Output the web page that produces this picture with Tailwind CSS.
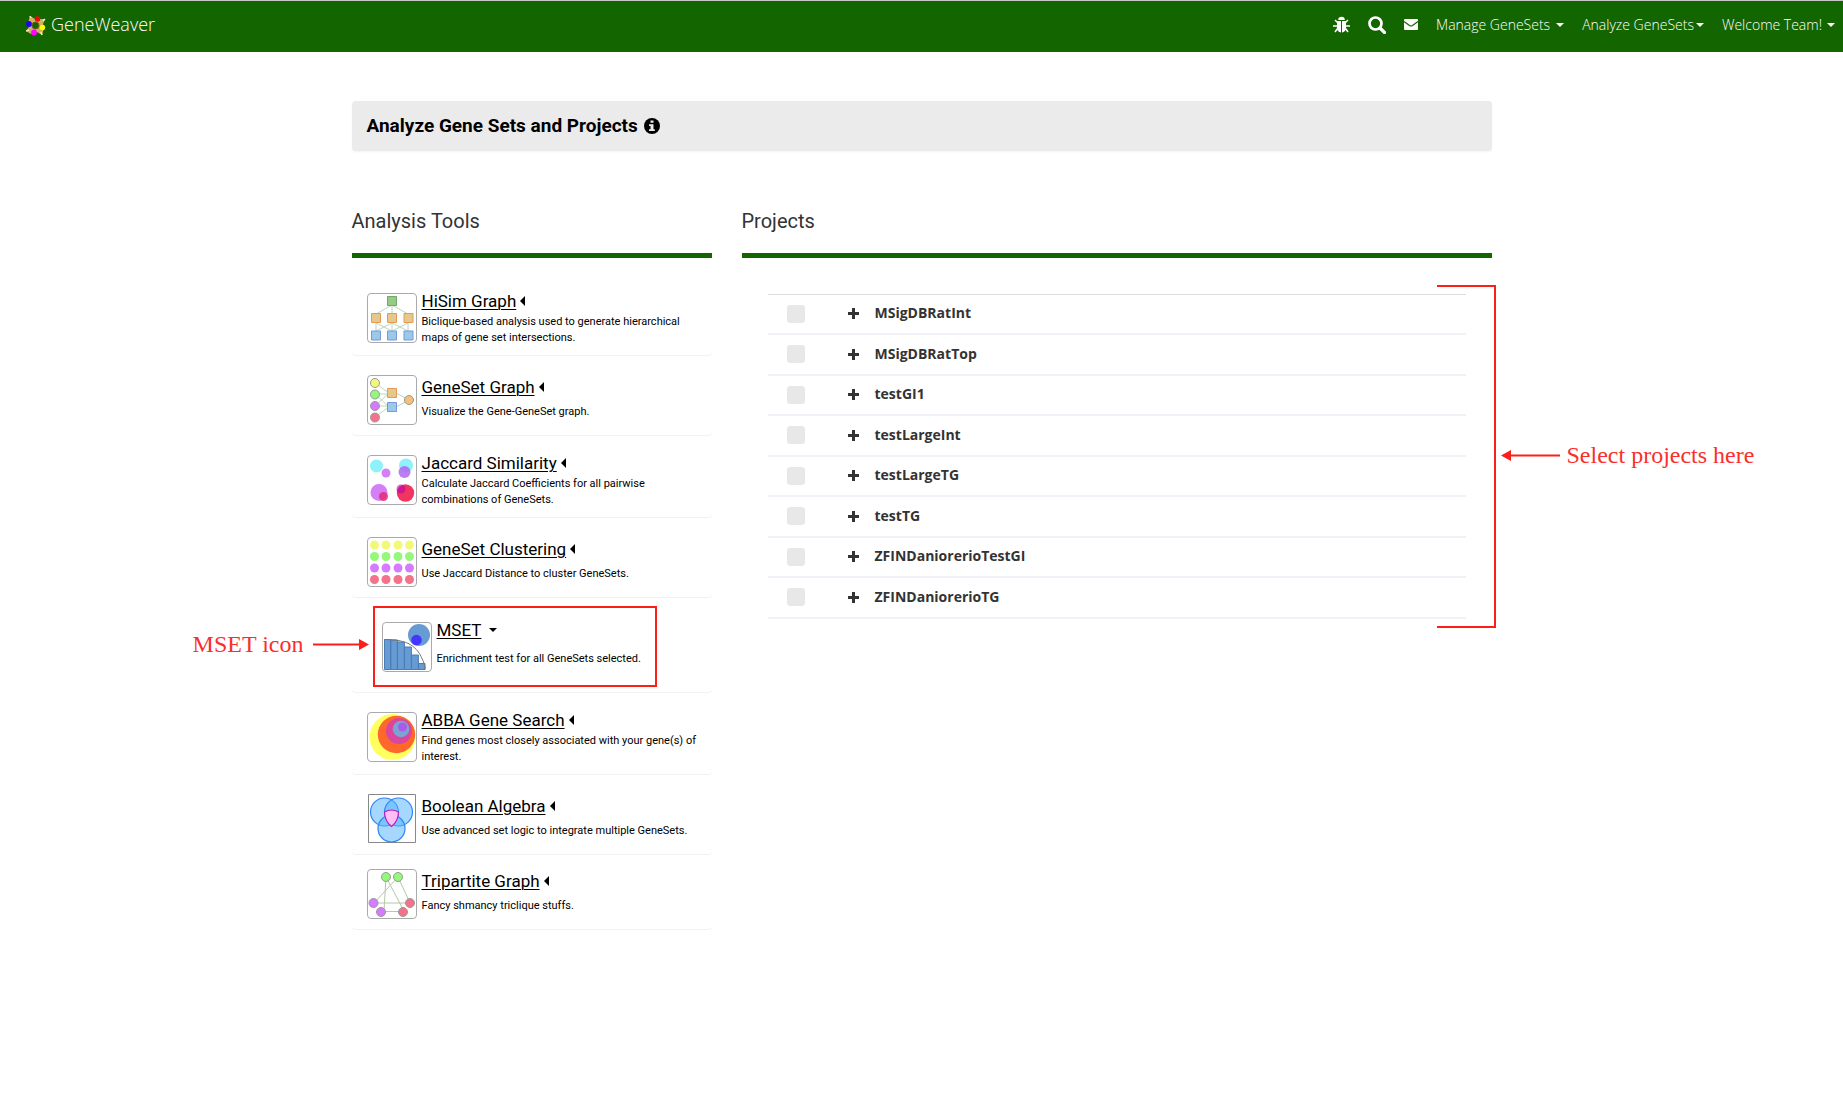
<!DOCTYPE html>
<html lang="en">
<head>
<meta charset="utf-8">
<title>GeneWeaver - Analyze Gene Sets and Projects</title>
<script src="https://cdn.jsdelivr.net/npm/@tailwindcss/browser@4"></script>
</head>
<body class="min-h-screen bg-white font-['Open_Sans',sans-serif] text-black">

<header class="flex h-[52px] items-center justify-between border-t border-b border-t-[#c8c8c8] border-b-[#1c4f5c] bg-[#136500] pr-2 pl-[26px] pb-1 font-light text-white">
  <a href="#" class="flex items-center gap-[5px] text-[18px] leading-6">
    <svg class="mt-1 size-5" viewBox="0 0 20 20" aria-hidden="true">
      <path d="M4 0L9 3L12 3L19 3L17 8L18 12L16 19L11 16L5 18L0 15L3 11L2 7Z" fill="#ceb35e"/>
      <path d="M4 0L5 2M19 3L17 5M16 19L15 16M0 15L3 14" stroke="#f3ead0" stroke-width="1.5"/>
      <circle cx="9.500" cy="9.500" r="3.500" fill="#136500" stroke="#6b5b25"/>
      <circle cx="11.500" cy="3" r="2.700" fill="#f00"/>
      <circle cx="3" cy="8" r="2.900" fill="#20f"/>
      <circle cx="16.500" cy="11.500" r="2.700" fill="#ff0"/>
      <circle cx="8" cy="16.500" r="2.900" fill="#f0f"/>
    </svg>
    <span>GeneWeaver</span>
  </a>
  <nav class="flex items-center pt-px text-[14px] leading-5">
    <a href="#" aria-label="Report a bug" class="mr-[18px]">
      <svg class="size-[17px]" viewBox="0 0 17 17" fill="none" stroke="#fff" stroke-width="1.500" aria-hidden="true">
        <path d="M5.200 4a3.300 3.300 0 0 1 6.600 0z" fill="#fff" stroke="none"/>
        <path d="M4 5h4v11.500C5.500 16.300 4 14.500 4 12zM9 5h4v7c0 2.500-1.500 4.300-4 4.500z" fill="#fff" stroke="none"/>
        <path d="M4.500 6.500L2 4M12.500 6.500L15 4M4 10H0M13 10h4M4.500 12.500L2 16M12.500 12.500L15 16"/>
      </svg>
    </a>
    <a href="#" aria-label="Search" class="mr-[18px]">
      <svg class="size-[18px]" viewBox="0 0 18 18" fill="none" stroke="#fff" aria-hidden="true">
        <circle cx="7.500" cy="7.500" r="6" stroke-width="2.700"/><path d="M12 12l4.500 4.500" stroke-width="3.200" stroke-linecap="round"/>
      </svg>
    </a>
    <a href="#" aria-label="Messages" class="mr-[18px]">
      <svg class="h-[11px] w-[14px]" viewBox="0 0 14 11" aria-hidden="true">
        <rect width="14" height="11" rx="1" fill="#fff"/><path d="M0 2.500L5.500 6.500Q7 7.500 8.500 6.500L14 2.500" fill="none" stroke="#136500" stroke-width="1.200"/>
      </svg>
    </a>
    <button class="mr-[18px] flex items-center gap-[6px]">Manage GeneSets <span class="border-x-4 border-t-4 border-x-transparent border-t-white"></span></button>
    <button class="mr-[18px] flex items-center gap-[2px]">Analyze GeneSets<span class="border-x-4 border-t-4 border-x-transparent border-t-white"></span></button>
    <button class="flex items-center gap-[5px]">Welcome Team! <span class="border-x-4 border-t-4 border-x-transparent border-t-white"></span></button>
  </nav>
</header>

<main class="mx-auto max-w-[1140px] pt-[49px] pb-10 font-[Roboto,sans-serif]">
  <div class="flex h-[50px] items-center gap-[6px] rounded bg-[#ebebeb] px-[15px] shadow-xs">
    <h1 class="text-[19px] leading-6 font-bold">Analyze Gene Sets and Projects</h1>
    <svg class="size-4" viewBox="0 0 16 16" role="img" aria-label="Information">
      <circle cx="8" cy="8" r="8" fill="#000"/><path d="M6.500 2.500h3v2.300h-3zM5 6.300h4.500v5h1.300v1.700H5v-1.700h1.500V8H5z" fill="#ebebeb"/>
    </svg>
  </div>

  <div class="mt-[56px] grid grid-cols-[360px_1fr] gap-[30px]">
    <section>
      <h2 class="h-[51px] border-b-5 border-[#136500] text-[20px] leading-7 text-[#333]">Analysis Tools</h2>
      <div class="mt-5 flex flex-col gap-[5px] text-[11px] leading-4">

        <article class="flex gap-[5px] rounded px-[15px] pt-[11px] pb-[9px] shadow-2xs">
          <svg class="mt-1 size-[50px] shrink-0 rounded-sm border border-[#aaa]" viewBox="1 1 48 48" aria-hidden="true">
            <path d="M25 12v9M25 12L9 21M25 12l16 9M9 30v8M25 30v8M41 30v8M9 30l16 8M25 30L9 38M25 30l16 8M41 30l-16 8" fill="none" stroke="#bcd8bc"/>
            <path d="M20.500 3.500h9v9h-9z" fill="#96ca85" stroke="#6aaa64"/>
            <path d="M4.500 20.500h9v9h-9zM20.500 20.500h9v9h-9zM37 20.500h9v9h-9z" fill="#e6c88d" stroke="#e29a55"/>
            <path d="M4.500 38h9v9h-9zM20.500 38h9v9h-9zM37 38h9v9h-9z" fill="#9bc9e8" stroke="#7797dc"/>
          </svg>
          <div>
            <h3 class="flex items-center gap-1 text-[17px] leading-6"><a href="#" class="underline decoration-1 underline-offset-2">HiSim Graph</a><span class="border-y-5 border-r-5 border-y-transparent border-r-black"></span></h3>
            <p class="mt-px">Biclique-based analysis used to generate hierarchical<br>maps of gene set intersections.</p>
          </div>
        </article>

        <article class="flex gap-[5px] rounded px-[15px] pt-[15px] pb-[10px] shadow-2xs">
          <svg class="size-[50px] shrink-0 rounded-sm border border-[#aaa]" viewBox="1 1 48 48" aria-hidden="true">
            <path d="M8 8l14 10M8 19h14M8 31l14-13M8 19l14 13M8 31h14M8 42l14-10M29 18l13 7M29 32l13-7" fill="none" stroke="#bcd8bc"/>
            <g stroke="#999"><circle cx="8" cy="8" r="4.500" fill="#f3f87a"/><circle cx="8" cy="19.500" r="4.500" fill="#94f87a"/><circle cx="8" cy="31" r="4.500" fill="#d67aff"/><circle cx="8" cy="42.500" r="4.500" fill="#f4738a"/><circle cx="42" cy="25" r="4.500" fill="#f4c17a"/></g>
            <path d="M20.500 13.500h9v9h-9z" fill="#e6c88d" stroke="#e29a55"/><path d="M20.500 27.500h9v9h-9z" fill="#9bc9e8" stroke="#7797dc"/>
          </svg>
          <div>
            <h3 class="flex items-center gap-1 text-[17px] leading-6"><a href="#" class="underline decoration-1 underline-offset-2">GeneSet Graph</a><span class="border-y-5 border-r-5 border-y-transparent border-r-black"></span></h3>
            <p class="mt-[5px]">Visualize the Gene-GeneSet graph.</p>
          </div>
        </article>

        <article class="flex gap-[5px] rounded px-[15px] pt-[11px] pb-[9px] shadow-2xs">
          <svg class="mt-1 size-[50px] shrink-0 rounded-sm border border-[#aaa]" viewBox="1 1 48 48" aria-hidden="true">
            <circle cx="9.500" cy="11" r="6.500" fill="#8ff2fa"/><circle cx="39" cy="10.500" r="7" fill="#8ff2fa"/>
            <circle cx="19" cy="18" r="4.500" fill="#d47ff8"/><circle cx="37.500" cy="17" r="6" fill="#b067ee" fill-opacity=".85"/>
            <circle cx="12" cy="37.500" r="8.500" fill="#d47ff8"/><circle cx="16.500" cy="41.500" r="4.500" fill="#e62a75" fill-opacity=".85"/>
            <circle cx="38.500" cy="38" r="8.700" fill="#f03560"/><circle cx="34" cy="34" r="4.500" fill="#be00aa" fill-opacity=".6"/>
          </svg>
          <div>
            <h3 class="flex items-center gap-1 text-[17px] leading-6"><a href="#" class="underline decoration-1 underline-offset-2">Jaccard Similarity</a><span class="border-y-5 border-r-5 border-y-transparent border-r-black"></span></h3>
            <p class="mt-px">Calculate Jaccard Coefficients for all pairwise<br>combinations of GeneSets.</p>
          </div>
        </article>

        <article class="flex gap-[5px] rounded px-[15px] pt-[15px] pb-[10px] shadow-2xs">
          <svg class="size-[50px] shrink-0 rounded-sm border border-[#aaa]" viewBox="1 1 48 48" aria-hidden="true">
            <g fill="#f3f87a"><circle cx="7.500" cy="8" r="4.500"/><circle cx="19" cy="8" r="4.500"/><circle cx="31" cy="8" r="4.500"/><circle cx="42.500" cy="8" r="4.500"/></g>
            <g fill="#94f87a"><circle cx="7.500" cy="19.500" r="4.500"/><circle cx="19" cy="19.500" r="4.500"/><circle cx="31" cy="19.500" r="4.500"/><circle cx="42.500" cy="19.500" r="4.500"/></g>
            <g fill="#d67aff"><circle cx="7.500" cy="31" r="4.500"/><circle cx="19" cy="31" r="4.500"/><circle cx="31" cy="31" r="4.500"/><circle cx="42.500" cy="31" r="4.500"/></g>
            <g fill="#f4738a"><circle cx="7.500" cy="42.500" r="4.500"/><circle cx="19" cy="42.500" r="4.500"/><circle cx="31" cy="42.500" r="4.500"/><circle cx="42.500" cy="42.500" r="4.500"/></g>
          </svg>
          <div>
            <h3 class="flex items-center gap-1 text-[17px] leading-6"><a href="#" class="underline decoration-1 underline-offset-2">GeneSet Clustering</a><span class="border-y-5 border-r-5 border-y-transparent border-r-black"></span></h3>
            <p class="mt-[5px]">Use Jaccard Distance to cluster GeneSets.</p>
          </div>
        </article>

        <article class="relative flex gap-[5px] rounded px-[30px] pt-4 pb-5 shadow-2xs">
          <div class="absolute top-1 left-[21px] h-[81px] w-[284px] border-2 border-[#fb1e1a]"></div>
          <div class="absolute top-7 right-[343px] flex items-center gap-[9px] font-['Liberation_Serif',serif] text-[24px] leading-7 whitespace-nowrap text-[#fb2e2e]">
            MSET icon
            <svg class="h-[11px] w-14" viewBox="0 0 56 11" fill="#fb1e1a" aria-hidden="true"><path d="M0 4.500h46V0l10 5.500L46 11V6.500H0z"/></svg>
          </div>
          <svg class="mt-1 size-[50px] shrink-0 rounded-sm border border-[#aaa]" viewBox="1 1 48 48" aria-hidden="true">
            <circle cx="37" cy="13" r="11" fill="#679bd3"/><circle cx="34.500" cy="18" r="5.300" fill="#4336ff"/>
            <path d="M2.500 17.500h6.200V47.500H2.500zM8.700 18h6.700v29.500H8.700zM15.400 20h7v27.500h-7zM22.400 25h7v22.500h-7zM29.400 33h7v14.500h-7zM36.400 41.500h6.600V47.500h-6.600z" fill="#679bd3" stroke="#4b7db5"/>
            <path d="M2 17.500c15 0 30 2 37 17 3 6 4 9 4 13" fill="none" stroke="#777"/>
          </svg>
          <div>
            <h3 class="flex items-center gap-2 text-[17px] leading-6"><a href="#" class="underline decoration-1 underline-offset-2">MSET</a><span class="border-x-4 border-t-4 border-x-transparent border-t-black"></span></h3>
            <p class="mt-[9px]">Enrichment test for all GeneSets selected.</p>
          </div>
        </article>

        <article class="flex gap-[5px] rounded px-[15px] pt-[11px] pb-[9px] shadow-2xs">
          <svg class="mt-1 size-[50px] shrink-0 rounded-sm border border-[#aaa]" viewBox="1 1 48 48" aria-hidden="true">
            <circle cx="25.500" cy="25" r="23" fill="#ffff5e"/><circle cx="29.500" cy="22.500" r="18.700" fill="#ff682a"/><circle cx="32" cy="19" r="13" fill="#d9459f"/><circle cx="34" cy="17" r="8.300" fill="#7ba5d0"/><circle cx="35.500" cy="15" r="4.500" fill="#a95bea"/>
          </svg>
          <div>
            <h3 class="flex items-center gap-1 text-[17px] leading-6"><a href="#" class="underline decoration-1 underline-offset-2">ABBA Gene Search</a><span class="border-y-5 border-r-5 border-y-transparent border-r-black"></span></h3>
            <p class="mt-px">Find genes most closely associated with your gene(s) of<br>interest.</p>
          </div>
        </article>

        <div>
          <article class="flex gap-[5px] rounded px-[15px] pt-[15px] pb-[10px] shadow-2xs">
            <svg class="size-[50px] shrink-0" viewBox="0 0 50 50" aria-hidden="true">
              <path d="M1.500.500h47v48h-47z" fill="#fff" stroke="#888"/>
              <g fill="#4db1ff" fill-opacity=".5" stroke="#2f86f0" stroke-width="1.200"><circle cx="17.500" cy="18" r="14"/><circle cx="31.500" cy="18" r="14"/><circle cx="24.500" cy="34.500" r="13.500"/></g>
              <path d="M17.500 18q7-4 14 0q0 9-7 14.500q-7-5.500-7-14.500z" fill="#ffbdf5" stroke="#b51fb8" stroke-width="1.200"/>
            </svg>
            <div>
              <h3 class="flex items-center gap-1 text-[17px] leading-6"><a href="#" class="underline decoration-1 underline-offset-2">Boolean Algebra</a><span class="border-y-5 border-r-5 border-y-transparent border-r-black"></span></h3>
              <p class="mt-[5px]">Use advanced set logic to integrate multiple GeneSets.</p>
            </div>
          </article>
          <article class="flex gap-[5px] rounded px-[15px] pt-[15px] pb-[10px] shadow-2xs">
            <svg class="size-[50px] shrink-0 rounded-sm border border-[#aaa]" viewBox="1 1 48 48" aria-hidden="true">
              <path d="M19 8l-2 34M19 8l18 34M31 8L7 34M31 8l12 26M7 34h36M15 42.500h20" fill="none" stroke="#b4c8a4"/>
              <g stroke="#999"><circle cx="19" cy="8" r="4.500" fill="#94f87a"/><circle cx="31" cy="8" r="4.500" fill="#94f87a"/><circle cx="6.500" cy="34" r="4.500" fill="#d67aff"/><circle cx="14" cy="43" r="4.500" fill="#d67aff"/><circle cx="43" cy="34" r="4.500" fill="#f4738a"/><circle cx="36" cy="43" r="4.500" fill="#f4738a"/></g>
            </svg>
            <div>
              <h3 class="flex items-center gap-1 text-[17px] leading-6"><a href="#" class="underline decoration-1 underline-offset-2">Tripartite Graph</a><span class="border-y-5 border-r-5 border-y-transparent border-r-black"></span></h3>
              <p class="mt-[5px]">Fancy shmancy triclique stuffs.</p>
            </div>
          </article>
        </div>
      </div>
    </section>

    <section>
      <h2 class="h-[51px] border-b-5 border-[#136500] text-[20px] leading-7 text-[#333]">Projects</h2>
      <div class="relative mt-9 px-[26px]">
        <table class="w-full border-collapse border-t border-[#ddd] font-['Open_Sans',sans-serif] text-[14px] leading-5 text-[#333]">
          <tbody id="projects"></tbody>
        </table>
        <div class="absolute -top-[9px] -right-1 h-[343px] w-[59px] border-2 border-l-0 border-[#fb1e1a]"></div>
        <div class="absolute top-[147px] left-full ml-[9px] flex items-center gap-[7px] font-['Liberation_Serif',serif] text-[24px] leading-7 whitespace-nowrap text-[#fb2e2e]">
          <svg class="h-[11px] w-[59px]" viewBox="0 0 59 11" fill="#fb1e1a" aria-hidden="true"><path d="M59 4.500H10V0L0 5.500L10 11V6.500H59z"/></svg>
          Select projects here
        </div>
      </div>
    </section>
  </div>
</main>

<script>
  const names = ["MSigDBRatInt", "MSigDBRatTop", "testGI1", "testLargeInt", "testLargeTG", "testTG", "ZFINDaniorerioTestGI", "ZFINDaniorerioTG"];
  document.getElementById("projects").innerHTML = names.map((name, i) => `
    <tr class="h-10 border-b-2 border-[#eff3f8] first:h-[39px] even:h-[41px] last:h-10">
      <td class="w-20 pl-[19px]"><input type="checkbox" id="project-${i}" class="block size-[18px] appearance-none rounded-[3px] bg-[#e8e8e8]"></td>
      <td class="w-[27px]"><button class="block" aria-label="Expand ${name}"><svg class="size-[11px]" viewBox="0 0 11 11" fill="#333" aria-hidden="true"><path d="M4 0h3v4h4v3H7v4H4V7H0V4h4z"/></svg></button></td>
      <td class="pb-px font-bold"><label for="project-${i}">${name}</label></td>
    </tr>`).join("");
</script>
</body>
</html>
